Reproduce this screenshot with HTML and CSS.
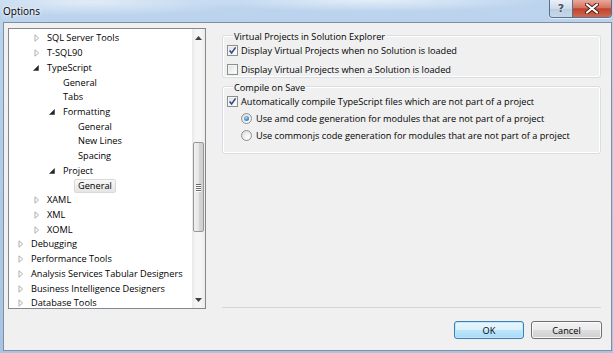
FILE: index.html
```html
<!DOCTYPE html>
<html lang="en">
<head>
    <meta charset="UTF-8">
    <title>Options</title>
    <link rel="stylesheet" href="styles.css">
</head>
<body>
    <div class="window">
        <div class="titlebar">
            <span class="title">Options</span>
            <div class="caption-buttons">
                <span class="caption-btn help">?</span>
                <span class="caption-btn close">
                    <svg viewBox="0 0 14 11" width="14" height="11">
                        <path d="M2 1.5 L12 9.5 M12 1.5 L2 9.5" stroke="#4b1f18" stroke-width="4" stroke-linecap="round"/>
                        <path d="M2 1.5 L12 9.5 M12 1.5 L2 9.5" stroke="#fff" stroke-width="2.2" stroke-linecap="round"/>
                    </svg>
                </span>
            </div>
        </div>

        <div class="client">
            <div class="main">
                <div class="tree-box">
                    <ul class="tree">
                        <li class="row l1"><span class="toggle"><svg class="arrow" viewBox="0 0 6 8"><path d="M1 0.8 L4.6 4 L1 7.2 Z"/></svg></span><span class="label">SQL Server Tools</span></li>
                        <li class="row l1"><span class="toggle"><svg class="arrow" viewBox="0 0 6 8"><path d="M1 0.8 L4.6 4 L1 7.2 Z"/></svg></span><span class="label">T-SQL90</span></li>
                        <li class="row l1"><span class="toggle"><svg class="arrow open" viewBox="0 0 6 6"><path d="M5.5 0.5 L5.5 5.5 L0.5 5.5 Z"/></svg></span><span class="label">TypeScript</span></li>
                        <li class="row l2"><span class="toggle"></span><span class="label">General</span></li>
                        <li class="row l2"><span class="toggle"></span><span class="label">Tabs</span></li>
                        <li class="row l2"><span class="toggle"><svg class="arrow open" viewBox="0 0 6 6"><path d="M5.5 0.5 L5.5 5.5 L0.5 5.5 Z"/></svg></span><span class="label">Formatting</span></li>
                        <li class="row l3"><span class="toggle"></span><span class="label">General</span></li>
                        <li class="row l3"><span class="toggle"></span><span class="label">New Lines</span></li>
                        <li class="row l3"><span class="toggle"></span><span class="label">Spacing</span></li>
                        <li class="row l2"><span class="toggle"><svg class="arrow open" viewBox="0 0 6 6"><path d="M5.5 0.5 L5.5 5.5 L0.5 5.5 Z"/></svg></span><span class="label">Project</span></li>
                        <li class="row l3"><span class="toggle"></span><span class="label selected">General</span></li>
                        <li class="row l1"><span class="toggle"><svg class="arrow" viewBox="0 0 6 8"><path d="M1 0.8 L4.6 4 L1 7.2 Z"/></svg></span><span class="label">XAML</span></li>
                        <li class="row l1"><span class="toggle"><svg class="arrow" viewBox="0 0 6 8"><path d="M1 0.8 L4.6 4 L1 7.2 Z"/></svg></span><span class="label">XML</span></li>
                        <li class="row l1"><span class="toggle"><svg class="arrow" viewBox="0 0 6 8"><path d="M1 0.8 L4.6 4 L1 7.2 Z"/></svg></span><span class="label">XOML</span></li>
                        <li class="row l0"><span class="toggle"><svg class="arrow" viewBox="0 0 6 8"><path d="M1 0.8 L4.6 4 L1 7.2 Z"/></svg></span><span class="label">Debugging</span></li>
                        <li class="row l0"><span class="toggle"><svg class="arrow" viewBox="0 0 6 8"><path d="M1 0.8 L4.6 4 L1 7.2 Z"/></svg></span><span class="label">Performance Tools</span></li>
                        <li class="row l0"><span class="toggle"><svg class="arrow" viewBox="0 0 6 8"><path d="M1 0.8 L4.6 4 L1 7.2 Z"/></svg></span><span class="label">Analysis Services Tabular Designers</span></li>
                        <li class="row l0"><span class="toggle"><svg class="arrow" viewBox="0 0 6 8"><path d="M1 0.8 L4.6 4 L1 7.2 Z"/></svg></span><span class="label">Business Intelligence Designers</span></li>
                        <li class="row l0"><span class="toggle"><svg class="arrow" viewBox="0 0 6 8"><path d="M1 0.8 L4.6 4 L1 7.2 Z"/></svg></span><span class="label">Database Tools</span></li>
                    </ul>
                    <div class="scrollbar">
                        <div class="scroll-btn">
                            <svg viewBox="0 0 7 4" width="7" height="4"><path d="M0 4 L3.5 0 L7 4 Z"/></svg>
                        </div>
                        <div class="scroll-track">
                            <div class="thumb">
                                <span class="grip"></span>
                                <span class="grip"></span>
                                <span class="grip"></span>
                                <span class="grip"></span>
                            </div>
                        </div>
                        <div class="scroll-btn">
                            <svg viewBox="0 0 7 4" width="7" height="4"><path d="M0 0 L7 0 L3.5 4 Z"/></svg>
                        </div>
                    </div>
                </div>

                <div class="page">
                    <div class="group group-virtual">
                        <div class="group-title">Virtual Projects in Solution Explorer</div>
                        <label class="option">
                            <span class="checkbox checked">
                                <svg viewBox="0 0 9 9" width="9" height="9"><path d="M1.6 4.6 L3.6 7 L7.6 1.4" stroke="#2e4a8a" stroke-width="1.6" fill="none"/></svg>
                            </span>
                            Display Virtual Projects when no Solution is loaded
                        </label>
                        <label class="option">
                            <span class="checkbox"></span>
                            Display Virtual Projects when a Solution is loaded
                        </label>
                    </div>

                    <div class="group group-compile">
                        <div class="group-title">Compile on Save</div>
                        <label class="option">
                            <span class="checkbox checked">
                                <svg viewBox="0 0 9 9" width="9" height="9"><path d="M1.6 4.6 L3.6 7 L7.6 1.4" stroke="#2e4a8a" stroke-width="1.6" fill="none"/></svg>
                            </span>
                            Automatically compile TypeScript files which are not part of a project
                        </label>
                        <label class="option sub">
                            <span class="radio checked"><span class="dot"></span></span>
                            Use amd code generation for modules that are not part of a project
                        </label>
                        <label class="option sub">
                            <span class="radio"></span>
                            Use commonjs code generation for modules that are not part of a project
                        </label>
                    </div>
                </div>
            </div>

            <div class="footer">
                <button class="btn btn-default">OK</button>
                <button class="btn">Cancel</button>
            </div>
        </div>
    </div>
</body>
</html>
```

FILE: styles.css
```css
body {
    margin: 0;
    width: 613px;
    height: 353px;
    overflow: hidden;
    font-family: "Open Sans", "Noto Sans", sans-serif;
    font-size: 9.2px;
    color: #000;
}

.window {
    width: 613px;
    height: 353px;
    display: flex;
    flex-direction: column;
    box-sizing: border-box;
    padding: 0 1px 2px 3px;
    background:
        radial-gradient(ellipse 160px 14px at 90px 2px, rgba(255,255,255,0.55), rgba(255,255,255,0) 100%),
        radial-gradient(ellipse 180px 12px at 370px 0px, rgba(255,255,255,0.6), rgba(255,255,255,0) 100%),
        linear-gradient(to bottom, #bcd4ee 0%, #b2cce8 40%, #a9c4e2 100%);
}

/* title bar */

.titlebar {
    height: 22px;
    display: flex;
    align-items: flex-start;
    justify-content: space-between;
    flex-shrink: 0;
}

.title {
    margin-top: 4px;
    font-size: 10px;
    color: #000;
    text-shadow: 0 0 6px #fff, 0 0 3px #fff;
}

.caption-buttons {
    display: flex;
    height: 17px;
    border: 1px solid #5a6f8a;
    border-top: none;
    border-radius: 0 0 4px 4px;
    overflow: hidden;
    box-shadow: 0 1px 0 rgba(255,255,255,0.6);
}

.caption-btn {
    display: flex;
    align-items: center;
    justify-content: center;
    height: 17px;
}

.help {
    width: 22px;
    border-right: 1px solid #5a6f8a;
    background: linear-gradient(to bottom, #e9f0f8 0%, #cddcec 50%, #b9cde3 51%, #c7d8ea 100%);
    color: #4a4f57;
    font-family: "DejaVu Sans", sans-serif;
    font-size: 11px;
    font-weight: bold;
    text-shadow: 0 0 2px #fff;
}

.close {
    width: 38px;
    background: linear-gradient(to bottom, #e9a99c 0%, #d5735f 45%, #c2432c 52%, #cf6852 100%);
}

/* client area */

.client {
    flex: 1;
    display: flex;
    flex-direction: column;
    border: 1px solid #7f8ea2;
    background: #f0f0f0;
}

.main {
    display: flex;
    height: 281px;
    margin: 5px 10px 0 4px;
}

/* tree */

.tree-box {
    width: 198px;
    box-sizing: border-box;
    border: 1px solid #828790;
    background: #fff;
    display: flex;
    overflow: hidden;
}

.tree {
    flex: 1;
    list-style: none;
    margin: 0;
    padding: 2px 0 0 0;
    overflow: hidden;
}

.row {
    height: 14.72px;
    display: flex;
    align-items: center;
    white-space: nowrap;
}

.l0 { padding-left: 3px; }
.l1 { padding-left: 19px; }
.l2 { padding-left: 35px; }
.l3 { padding-left: 50px; }

.toggle {
    width: 15px;
    height: 8px;
    flex-shrink: 0;
    display: flex;
    align-items: center;
}

.arrow {
    width: 6px;
    height: 8px;
    margin-left: 6px;
    fill: #fff;
    stroke: #a6a6a6;
    stroke-width: 0.9;
}

.arrow.open {
    width: 6px;
    height: 6px;
    margin-left: 5px;
    fill: #262626;
    stroke: #262626;
    stroke-width: 0.5;
}

.label {
    padding: 0 3px;
    line-height: 12px;
    border: 1px solid transparent;
    border-radius: 2px;
}

.label.selected {
    border-color: #d9d9d9;
    background: linear-gradient(to bottom, #f8f8f8, #e5e5e5);
}

/* scrollbar */

.scrollbar {
    width: 13px;
    flex-shrink: 0;
    display: flex;
    flex-direction: column;
    background: linear-gradient(to right, #e9e9e9, #f5f5f5 30%, #f5f5f5 70%, #ececec);
}

.scroll-btn {
    height: 17px;
    display: flex;
    align-items: center;
    justify-content: center;
    fill: #404040;
}

.scroll-track {
    flex: 1;
}

.thumb {
    margin: 96px 1px 0 1px;
    height: 90px;
    box-sizing: border-box;
    border: 1px solid #979797;
    border-radius: 2px;
    background: linear-gradient(to right, #f1f1f1, #e6e6e6 50%, #d6d6d6 51%, #cfcfcf);
    display: flex;
    flex-direction: column;
    align-items: center;
    justify-content: center;
    gap: 1px;
}

.grip {
    width: 5px;
    height: 1px;
    background: #6a6a6a;
    box-shadow: 0 1px 0 #fff;
}

/* options page */

.page {
    flex: 1;
    margin-left: 16px;
    padding-top: 7px;
    border-bottom: 1px solid #d5d5d5;
    box-sizing: border-box;
    height: 280px;
    display: flex;
    flex-direction: column;
    gap: 8px;
}

.group {
    border: 1px solid #d5dfe5;
    border-radius: 3px;
    box-shadow: inset 0 0 0 1px #fff;
    padding: 0 4px;
    display: flex;
    flex-direction: column;
}

.group-title {
    align-self: flex-start;
    height: 12px;
    line-height: 12px;
    margin: -5px 0 0 6px;
    padding: 0 1px;
    background: #f0f0f0;
}

.group-virtual .option + .option {
    margin-top: 4px;
}

.group-compile .option + .option {
    margin-top: 2px;
}

.group-compile {
    padding-bottom: 10px;
}

.option {
    height: 15px;
    display: flex;
    align-items: center;
    gap: 3px;
    white-space: nowrap;
}

.option.sub {
    padding-left: 14px;
    gap: 4px;
}

.checkbox {
    width: 11px;
    height: 11px;
    box-sizing: border-box;
    border: 1px solid #8e8f8f;
    background: linear-gradient(135deg, #dcdcdc 0%, #f4f4f4 60%, #ffffff 100%);
    box-shadow: inset 0 0 0 1px #f4f4f4;
    display: flex;
    align-items: center;
    justify-content: center;
    flex-shrink: 0;
}

.radio {
    width: 11px;
    height: 11px;
    box-sizing: border-box;
    border: 1px solid #8e8f8f;
    border-radius: 50%;
    background: radial-gradient(circle at 65% 70%, #ffffff 0%, #e8e8e8 60%, #d0d0d0 100%);
    display: flex;
    align-items: center;
    justify-content: center;
    flex-shrink: 0;
}

.dot {
    width: 5px;
    height: 5px;
    border-radius: 50%;
    background: radial-gradient(circle at 40% 35%, #a9dcf8 0%, #3b8fd6 55%, #1b5fae 100%);
}

/* buttons */

.footer {
    display: flex;
    justify-content: flex-end;
    gap: 7px;
    margin: 12px 9px 0 0;
}

.btn {
    width: 71px;
    height: 18px;
    padding: 0;
    border: 1px solid #707070;
    border-radius: 3px;
    font-family: inherit;
    font-size: 9.2px;
    color: #000;
    background: linear-gradient(to bottom, #f2f2f2 0%, #ebebeb 50%, #dddddd 51%, #cfcfcf 100%);
    box-shadow: inset 0 0 0 1px rgba(255,255,255,0.8);
}

.btn-default {
    width: 70px;
    border-color: #3c7fb1;
    background: linear-gradient(to bottom, #eaf6fd 0%, #d9f0fc 50%, #bee6fd 51%, #a7d9f5 100%);
    box-shadow: inset 0 0 0 1px #bfe7fe;
}
```
